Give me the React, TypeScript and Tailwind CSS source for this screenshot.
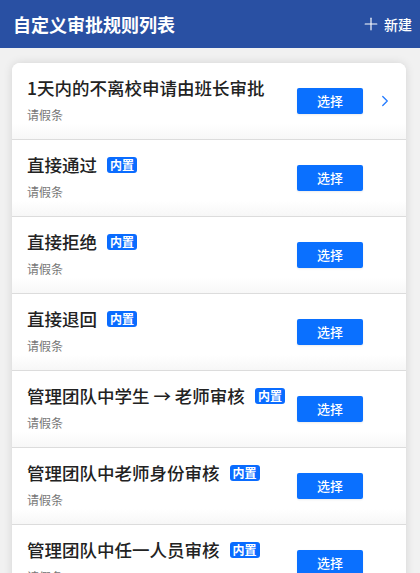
import { ChevronRight, Plus } from "lucide-react";

type Rule = {
  id: number;
  title: string;
  category: string;
  builtIn?: boolean;
  arrow?: boolean;
};

const rules: Rule[] = [
  { id: 1, title: "1天内的不离校申请由班长审批", category: "请假条", arrow: true },
  { id: 2, title: "直接通过", category: "请假条", builtIn: true },
  { id: 3, title: "直接拒绝", category: "请假条", builtIn: true },
  { id: 4, title: "直接退回", category: "请假条", builtIn: true },
  { id: 5, title: "管理团队中学生 → 老师审核", category: "请假条", builtIn: true },
  { id: 6, title: "管理团队中老师身份审核", category: "请假条", builtIn: true },
  { id: 7, title: "管理团队中任一人员审核", category: "请假条", builtIn: true },
];

function RuleRow({ rule }: { rule: Rule }) {
  return (
    <div className="relative flex h-[77px] items-center border-b border-[#dcdcdc] bg-gradient-to-b from-white from-80% to-[#f7f7f7] pl-[15px]">
      {/* Left */}
      <div className="flex min-w-0 flex-1 flex-col gap-[8px] pb-[2px]">
        <div className="flex items-center">
          <span className="text-[17.5px] font-medium leading-[22px] text-[#222]">{rule.title}</span>
          {rule.builtIn && (
            <span className="ml-[10px] rounded-[3px] bg-[#0a6cff] px-[3px] text-[12px] font-bold leading-[16px] text-white">
              内置
            </span>
          )}
        </div>
        <span className="text-[12px] leading-[16px] text-[#777]">{rule.category}</span>
      </div>

      {/* Right */}
      <button className="ml-[12px] flex h-[26px] w-[66px] shrink-0 items-center justify-center rounded-[2px] bg-[#0a70ff] text-[13px] font-medium text-white shadow-[0_1px_2px_rgba(0,0,0,0.08)]">
        选择
      </button>
      <div className="flex w-[43px] shrink-0 justify-center">
        {rule.arrow ? (
          <ChevronRight className="h-[18px] w-[18px] text-[#2a7fff]" strokeWidth={1.8} />
        ) : null}
      </div>
    </div>
  );
}

export default function App() {
  return (
    <div
      className="h-[573px] overflow-hidden bg-[#f1f1f1]"
      style={{ fontFamily: '"Noto Sans CJK SC", "Noto Sans", sans-serif' }}
    >
      {/* Header */}
      <div className="flex h-[48px] items-center justify-between bg-[#2950a3] pl-[13px] pr-[8px]">
        <h1 className="text-[18px] font-bold text-white">自定义审批规则列表</h1>
        <div className="flex items-center gap-[3px] text-[14px] font-medium text-white">
          <Plus className="h-[20px] w-[20px]" strokeWidth={1.4} />
          <span>新建</span>
        </div>
      </div>

      {/* List */}
      <div className="pl-[12px] pr-[14px] pt-[15px]">
        <div className="overflow-hidden rounded-t-[8px] bg-white shadow-[0_0_10px_rgba(0,0,0,0.12)]">
          {rules.map((rule) => (
            <RuleRow key={rule.id} rule={rule} />
          ))}
        </div>
      </div>
    </div>
  );
}
